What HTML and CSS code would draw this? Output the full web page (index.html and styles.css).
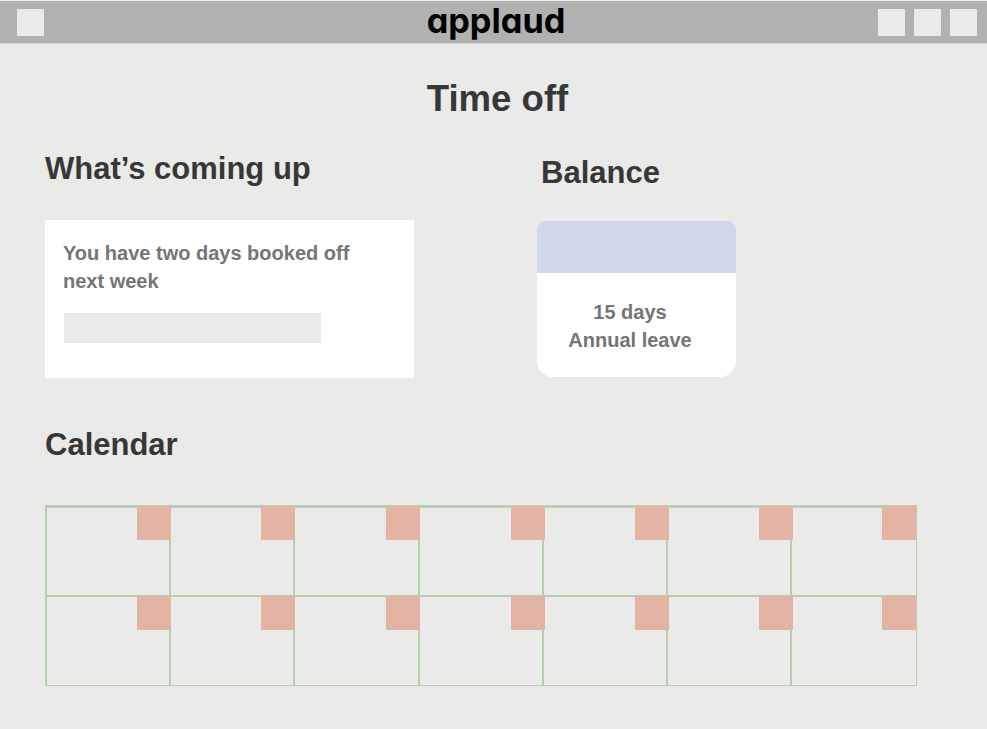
FILE: index.html
```html
<!DOCTYPE html>
<html lang="en">
<head>
    <meta charset="UTF-8">
    <meta name="viewport" content="width=device-width, initial-scale=1.0">
    <title>Time off</title>
    <link rel="stylesheet" href="styles.css">
</head>
<body>
    <header class="topbar">
        <div class="square"></div>
        <div class="logo">applaud</div>
        <div class="topbar-right">
            <div class="square"></div>
            <div class="square"></div>
            <div class="square"></div>
        </div>
    </header>

    <main class="page">
        <h1 class="page-title">Time off</h1>

        <div class="columns">
            <section class="upcoming">
                <h2 class="heading upcoming-heading">What’s coming up</h2>
                <div class="upcoming-card">
                    <p class="card-text">You have two days booked off<br>next week</p>
                    <div class="placeholder"></div>
                </div>
            </section>

            <section class="balance">
                <h2 class="heading balance-heading">Balance</h2>
                <div class="balance-card">
                    <div class="balance-top"></div>
                    <p class="card-text balance-text">15 days<br>Annual leave</p>
                </div>
            </section>
        </div>

        <h2 class="heading calendar-heading">Calendar</h2>

        <div class="calendar">
            <div class="day"><span class="marker"></span></div>
            <div class="day"><span class="marker"></span></div>
            <div class="day"><span class="marker"></span></div>
            <div class="day"><span class="marker"></span></div>
            <div class="day"><span class="marker"></span></div>
            <div class="day"><span class="marker"></span></div>
            <div class="day"><span class="marker"></span></div>
            <div class="day"><span class="marker"></span></div>
            <div class="day"><span class="marker"></span></div>
            <div class="day"><span class="marker"></span></div>
            <div class="day"><span class="marker"></span></div>
            <div class="day"><span class="marker"></span></div>
            <div class="day"><span class="marker"></span></div>
            <div class="day"><span class="marker"></span></div>
        </div>
    </main>
</body>
</html>
```

FILE: styles.css
```css
body {
    margin: 0;
    background-color: #eaeae8;
    font-family: "Liberation Sans", Arial, sans-serif;
    overflow: hidden;
}

.topbar {
    margin-top: 1px;
    height: 42px;
    display: grid;
    grid-template-columns: 1fr auto 1fr;
    align-items: center;
    padding: 0 10px 0 17px;
    background-color: #b1b1af;
    border-bottom: 1px solid #d2d2d0;
}

.topbar-right {
    display: flex;
    justify-content: flex-end;
    gap: 9px;
}

.square {
    width: 27px;
    height: 27px;
    background-color: #eaeae8;
}

.logo {
    padding: 0 2px 3px 0;
    font-family: Inter, "Liberation Sans", sans-serif;
    font-feature-settings: "cv11";
    font-weight: 650;
    font-size: 34.3px;
    line-height: 38px;
    color: #000;
}

.page {
    padding: 0 70px 0 45px;
}

.page-title {
    margin: 34px 0 0;
    padding-left: 33px;
    text-align: center;
    font-size: 36.6px;
    line-height: 42px;
    color: #373737;
}

.heading {
    margin: 0;
    font-size: 31px;
    line-height: 38px;
    color: #373737;
}

.columns {
    display: flex;
    margin-top: 29px;
}

.upcoming {
    width: 492px;
}

.upcoming-heading {
    margin-top: 1px;
}

.upcoming-card {
    margin-top: 32px;
    width: 369px;
    height: 158px;
    box-sizing: border-box;
    padding: 19px 18px;
    background-color: #fff;
}

.card-text {
    margin: 0;
    font-size: 20px;
    font-weight: 700;
    line-height: 28px;
    color: #757575;
}

.placeholder {
    margin: 18px 0 0 1px;
    width: 257px;
    height: 30px;
    background-color: #eaeae8;
}

.balance-heading {
    margin-top: 5px;
    padding-left: 4px;
}

.balance-card {
    margin-top: 29px;
    width: 199px;
    height: 156px;
    background-color: #fff;
    border-radius: 8px 8px 16px 16px;
    overflow: hidden;
}

.balance-top {
    height: 52px;
    background-color: #d1d6ea;
}

.balance-text {
    margin-top: 25px;
    padding-right: 13px;
    text-align: center;
}

.calendar-heading {
    margin-top: 48px;
}

.calendar {
    margin-top: 41px;
    width: 872px;
    box-sizing: border-box;
    display: grid;
    grid-template-columns: 124px 124px 125px 124px 124px 124px 125px;
    grid-auto-rows: 90px;
    border-left: 2px solid #b5ceac;
    border-bottom: 1px solid #b5ceac;
}

.day {
    display: flex;
    justify-content: flex-end;
    align-items: flex-start;
    border-top: 2px solid #b5ceac;
    border-right: 2px solid #b5ceac;
}

.day:nth-child(-n+7) {
    border-top-width: 3px;
    border-top-color: #bad0b2;
}

.day:nth-child(7n) {
    border-right-width: 1px;
}

.marker {
    width: 34px;
    height: 34px;
    margin-right: -2px;
    margin-top: -1px;
    background-color: #e3b4a3;
}

.day:nth-child(-n+7) .marker {
    margin-top: -2px;
}

.day:nth-child(7n+4) .marker,
.day:nth-child(7n+5) .marker,
.day:nth-child(7n+6) .marker {
    margin-right: -3px;
}

.day:nth-child(7n) .marker {
    margin-right: 0;
}
```
